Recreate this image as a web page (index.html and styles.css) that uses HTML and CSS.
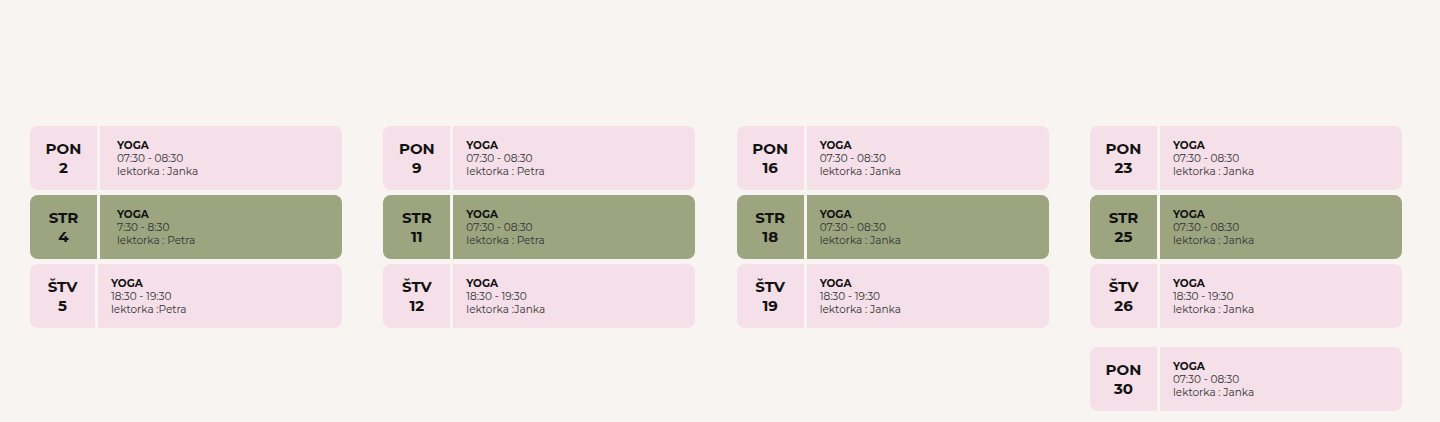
FILE: index.html
```html
<!DOCTYPE html>
<html lang="sk">
<head>
<meta charset="utf-8">
<title>Rozvrh</title>
<link rel="stylesheet" href="styles.css">
</head>
<body>
<main class="schedule">
  <section class="week">
    <div class="row pink"><div class="day">PON<br>2</div><div class="info wide"><b>YOGA</b><span>07:30 - 08:30</span><span>lektorka : Janka</span></div></div>
    <div class="row green"><div class="day">STR<br>4</div><div class="info wide"><b>YOGA</b><span>7:30 - 8:30</span><span>lektorka : Petra</span></div></div>
    <div class="row pink"><div class="day narrow">ŠTV<br>5</div><div class="info"><b>YOGA</b><span>18:30 - 19:30</span><span>lektorka :Petra</span></div></div>
  </section>
  <section class="week">
    <div class="row pink"><div class="day">PON<br>9</div><div class="info"><b>YOGA</b><span>07:30 - 08:30</span><span>lektorka : Petra</span></div></div>
    <div class="row green"><div class="day">STR<br>11</div><div class="info"><b>YOGA</b><span>07:30 - 08:30</span><span>lektorka : Petra</span></div></div>
    <div class="row pink"><div class="day">ŠTV<br>12</div><div class="info"><b>YOGA</b><span>18:30 - 19:30</span><span>lektorka :Janka</span></div></div>
  </section>
  <section class="week">
    <div class="row pink"><div class="day">PON<br>16</div><div class="info"><b>YOGA</b><span>07:30 - 08:30</span><span>lektorka : Janka</span></div></div>
    <div class="row green"><div class="day">STR<br>18</div><div class="info"><b>YOGA</b><span>07:30 - 08:30</span><span>lektorka : Janka</span></div></div>
    <div class="row pink"><div class="day">ŠTV<br>19</div><div class="info"><b>YOGA</b><span>18:30 - 19:30</span><span>lektorka : Janka</span></div></div>
  </section>
  <section class="week">
    <div class="row pink"><div class="day">PON<br>23</div><div class="info"><b>YOGA</b><span>07:30 - 08:30</span><span>lektorka : Janka</span></div></div>
    <div class="row green"><div class="day">STR<br>25</div><div class="info"><b>YOGA</b><span>07:30 - 08:30</span><span>lektorka : Janka</span></div></div>
    <div class="row pink"><div class="day">ŠTV<br>26</div><div class="info"><b>YOGA</b><span>18:30 - 19:30</span><span>lektorka : Janka</span></div></div>
    <div class="row pink extra"><div class="day">PON<br>30</div><div class="info"><b>YOGA</b><span>07:30 - 08:30</span><span>lektorka : Janka</span></div></div>
  </section>
</main>
</body>
</html>
```

FILE: styles.css
```css
html, body {
  margin: 0;
  background: #f8f4f1;
}
body {
  font-family: "Montserrat", "Inter", "DejaVu Sans", sans-serif;
  color: #1a1a1a;
}
.schedule {
  display: grid;
  grid-template-columns: repeat(4, 312px);
  justify-content: space-between;
  align-items: start;
  width: 1372px;
  padding: 126px 0 0 30px;
}
.week {
  display: flex;
  flex-direction: column;
  gap: 5px;
}
.row {
  display: flex;
  height: 64px;
  border-radius: 8px;
  overflow: hidden;
}
.row.extra {
  margin-top: 14px;
}
.pink { background: #f5dfe8; }
.green { background: #9ca480; }
.day {
  width: 67px;
  flex: none;
  display: flex;
  align-items: center;
  justify-content: center;
  text-align: center;
  font-weight: 700;
  font-size: 15px;
  line-height: 19px;
  color: #111;
  border-right: 3px solid #f8f4f1;
}
.day.narrow {
  width: 65px;
}
.info {
  flex: 1;
  display: flex;
  flex-direction: column;
  justify-content: center;
  padding-left: 13px;
  font-size: 10.5px;
  line-height: 13px;
  color: #333;
}
.info.wide {
  padding-left: 17px;
}
.info b {
  font-weight: 700;
  color: #111;
  font-size: 10.5px;
}
```
